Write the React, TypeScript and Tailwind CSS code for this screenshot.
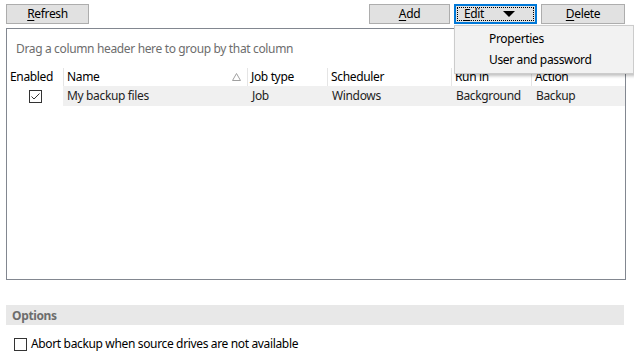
const font = "font-['Segoe_UI','Noto_Sans',sans-serif] tracking-[-0.35px]";

function Btn({
  u,
  rest,
  w,
  focused,
  children,
}: {
  u: string;
  rest: string;
  w: string;
  focused?: boolean;
  children?: React.ReactNode;
}) {
  if (focused) {
    return (
      <div className={`${w} h-[20px] border-2 border-[#0078d7] bg-[#e1e1e1] p-[1px]`}>
        <div className="flex h-full w-full items-center border border-dotted border-black pl-[6px] text-[12px] leading-none text-black">
          <span className="underline underline-offset-2">{u}</span>
          <span>{rest}</span>
          {children}
        </div>
      </div>
    );
  }
  return (
    <div
      className={`${w} flex h-[20px] items-center justify-center border border-[#adadad] bg-[#e1e1e1] text-[12px] leading-none text-black`}
    >
      <span className="underline underline-offset-2">{u}</span>
      <span>{rest}</span>
    </div>
  );
}

function Check({ checked }: { checked?: boolean }) {
  return (
    <div className="flex h-[13px] w-[13px] items-center justify-center border border-[#333] bg-white">
      {checked && (
        <svg width="11" height="11" viewBox="0 0 11 11">
          <path d="M1.5 5.5 L4 8 L9.5 2.5" fill="none" stroke="#333" strokeWidth="1" />
        </svg>
      )}
    </div>
  );
}

const cols = [
  { name: "Name", w: "w-[184px]", sort: true },
  { name: "Job type", w: "w-[80px]" },
  { name: "Scheduler", w: "w-[124px]" },
  { name: "Run in", w: "w-[80px]" },
  { name: "Action", w: "flex-1" },
];

const row = ["My backup files", "Job", "Windows", "Background", "Backup"];

export default function App() {
  return (
    <div className={`relative h-[356px] w-[634px] overflow-hidden bg-white ${font}`}>
      <div className="flex pl-[6px] pr-[9px] pt-[4px]">
        <Btn u="R" rest="efresh" w="w-[83px]" />
        <div className="ml-auto flex gap-[4px]">
          <Btn u="A" rest="dd" w="w-[81px]" />
          <Btn u="E" rest="dit" w="w-[83px]" focused>
            <svg width="12" height="7" viewBox="0 0 12 7" className="ml-[19px]">
              <path d="M0 0 H12 L6 6 Z" fill="#000" />
            </svg>
          </Btn>
          <Btn u="D" rest="elete" w="w-[84px]" />
        </div>
      </div>

      <div className="ml-[6px] mt-[4px] flex h-[252px] w-[620px] flex-col border border-[#828790]">
        <div className="flex h-[37px] items-center pl-[9px] pt-[2px] text-[12px] text-[#6d6d6d]">
          Drag a column header here to group by that column
        </div>
        <div className="flex h-[20px] items-center pt-[2px] text-[12px] text-black">
          <div className="w-[56px] pl-[3px]">Enabled</div>
          {cols.map((c) => (
            <div
              key={c.name}
              className={`${c.w} flex h-full items-center border-l border-[#e5e5e5] pl-[3px] pr-[6px]`}
            >
              <span>{c.name}</span>
              {c.sort && (
                <svg width="9" height="8" viewBox="0 0 9 8" className="ml-auto">
                  <path d="M4.5 0.5 L8.5 7.5 H0.5 Z" fill="none" stroke="#a0a0a0" />
                </svg>
              )}
            </div>
          ))}
        </div>
        <div className="flex h-[20px] items-center text-[12px] text-[#1e1e1e]">
          <div className="flex h-full w-[56px] items-center justify-center">
            <Check checked />
          </div>
          {row.map((t, i) => (
            <div
              key={t}
              className={`${cols[i].w} flex h-full items-center bg-[#f0f0f0] pl-[4px] ${i === 0 ? "" : "border-l border-[#f0f0f0]"}`}
            >
              {t}
            </div>
          ))}
        </div>
      </div>

      <div className="ml-[6px] mt-[25px] flex h-[20px] w-[618px] items-center bg-[#e8e8e8] pl-[6px] pt-[2px] text-[12px] font-bold text-[#6d6d6d]">
        Options
      </div>
      <div className="mt-[10px] flex items-center gap-[4px] pl-[14px] text-[12px] text-black">
        <Check />
        <span>Abort backup when source drives are not available</span>
      </div>

      <div className="absolute left-[454px] top-[25px] flex h-[49px] w-[180px] flex-col border border-[#cccccc] bg-[#f2f2f2] py-[2px] text-[12px] text-black shadow-[2px_2px_3px_rgba(0,0,0,0.25)]">
        <div className="flex h-[22px] items-center pl-[34px]">Properties</div>
        <div className="flex h-[22px] items-center pl-[34px]">User and password</div>
      </div>
    </div>
  );
}
